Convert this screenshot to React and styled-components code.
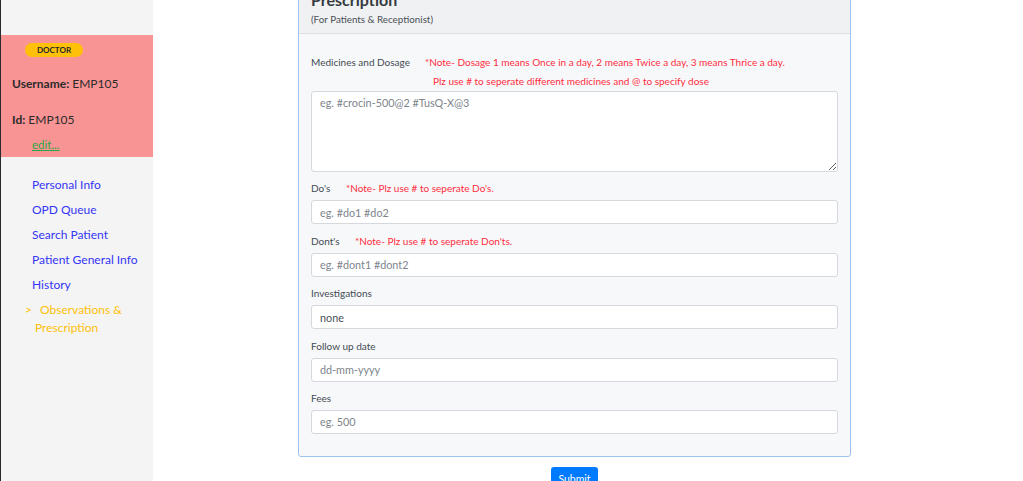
import React from 'react'
import styled, { createGlobalStyle } from 'styled-components'

const GlobalStyle = createGlobalStyle`
  html, body {
    margin: 0;
    padding: 0;
    height: 100%;
    overflow: hidden;
    background: #ffffff;
    font-family: Lato, 'Open Sans', sans-serif;
    color: #212529;
  }
  * {
    box-sizing: border-box;
  }
`

const Layout = styled.div`
  display: flex;
  height: 100vh;
`

/*Barre latérale*/
const Sidebar = styled.aside`
  width: 153px;
  flex-shrink: 0;
  background: #f4f4f4;
  border-left: 1px solid #2a2a2a;
  padding-top: 35px;
`

const ProfileBox = styled.div`
  background: #f99494;
  height: 122px;
  padding: 6px 0 0 11px;
  font-size: 12px;
`

const Badge = styled.span`
  display: inline-block;
  margin-left: 13px;
  width: 58px;
  height: 14px;
  line-height: 14px;
  border-radius: 7px;
  background: #ffc107;
  color: #212529;
  font-size: 8px;
  font-weight: 700;
  text-align: center;
`

const ProfileLine = styled.div`
  margin-top: ${(props) => props.gap}px;
  line-height: 16px;
  color: #2b2b2b;

  b {
    font-weight: 700;
  }
`

const EditLink = styled.a`
  display: block;
  margin: 9px 0 0 20px;
  color: #28a745;
  text-decoration: underline;
  font-size: 11.5px;
  line-height: 16px;
`

const Nav = styled.ul`
  list-style: none;
  margin: 0;
  padding: 19px 0 0 0;
`

const NavItem = styled.li`
  font-size: 12px;
  line-height: 18px;
  margin-bottom: 7px;
  padding-left: ${(props) => (props.active ? '34px' : '31px')};
  text-indent: ${(props) => (props.active ? '-10px' : '0')};
  padding-right: 8px;
  color: ${(props) => (props.active ? '#ffc107' : '#3535f5')};
`

const Caret = styled.span`
  display: inline-block;
  text-indent: 0;
  width: 15px;
`

/*Contenu principal*/
const Main = styled.main`
  flex: 1;
  padding-left: 145px;
`

const Card = styled.div`
  width: 553px;
  margin-top: -16px;
  border: 1px solid #9cc3ee;
  border-radius: 3px;
  background: #f7f8fa;
`

const CardHeader = styled.div`
  background: #f0f1f2;
  border-bottom: 1px solid #dcdfe3;
  padding: 5px 12px 0 12px;
  height: 49px;
`

const Title = styled.div`
  font-size: 16px;
  font-weight: 700;
  line-height: 20px;
  color: #343a40;
`

const Subtitle = styled.div`
  font-size: 9.8px;
  line-height: 18px;
  color: #495057;
`

const CardBody = styled.div`
  padding: 19px 12px 22px 12px;
`

const Field = styled.div`
  margin-bottom: 8.4px;

  &:last-child {
    margin-bottom: 0;
  }
`

const LabelRow = styled.div`
  display: flex;
  font-size: 10px;
  line-height: ${(props) => props.lh || 16}px;
  margin-bottom: ${(props) => (props.tight ? 0 : 4)}px;
  color: #444b52;
`

const Label = styled.span`
  width: ${(props) => props.w}px;
  flex-shrink: 0;
  white-space: nowrap;
`

const Note = styled.span`
  color: #ff2d3d;
  font-size: 10px;
  white-space: nowrap;
`

const NoteLine = styled.div`
  color: #ff2d3d;
  font-size: 10px;
  line-height: 19px;
  padding-left: 122px;
`

const Input = styled.input`
  display: block;
  width: 100%;
  height: 24px;
  border: 1px solid #d5d9dd;
  border-radius: 3px;
  background: #fff;
  padding: 0 8px;
  font-family: inherit;
  font-size: 10.8px;
  color: #495057;

  &::placeholder {
    color: #7d848b;
  }
`

const TextArea = styled.textarea`
  display: block;
  width: 100%;
  height: 81px;
  border: 1px solid #d5d9dd;
  border-radius: 3px;
  background: #fff;
  padding: 4px 8px;
  font-family: inherit;
  font-size: 10.8px;
  color: #495057;

  &::placeholder {
    color: #7d848b;
  }
`

const SubmitRow = styled.div`
  width: 553px;
  display: flex;
  justify-content: center;
  padding-top: 10px;
`

const SubmitButton = styled.button`
  background: #007bff;
  color: #fff;
  border: none;
  border-radius: 3px;
  width: 47px;
  height: 24px;
  font-family: inherit;
  font-size: 10.5px;
  padding: 0;
`

const navLinks = [
  'Personal Info',
  'OPD Queue',
  'Search Patient',
  'Patient General Info',
  'History',
]

function App() {
  return (
    <>
      <GlobalStyle />
      <Layout>
        <Sidebar>
          <ProfileBox>
            <Badge>DOCTOR</Badge>
            <ProfileLine gap={19}>
              <b>Username:</b> EMP105
            </ProfileLine>
            <ProfileLine gap={20}>
              <b>Id:</b> EMP105
            </ProfileLine>
            <EditLink href="#">edit...</EditLink>
          </ProfileBox>
          <Nav>
            {navLinks.map((link) => (
              <NavItem key={link}>{link}</NavItem>
            ))}
            <NavItem active>
              <Caret>&gt;</Caret>Observations &amp; Prescription
            </NavItem>
          </Nav>
        </Sidebar>
        <Main>
          <Card>
            <CardHeader>
              <Title>Prescription</Title>
              <Subtitle>(For Patients &amp; Receptionist)</Subtitle>
            </CardHeader>
            <CardBody>
              <Field>
                <LabelRow lh={19} tight>
                  <Label w={114}>Medicines and Dosage</Label>
                  <Note>
                    *Note- Dosage 1 means Once in a day, 2 means Twice a day, 3
                    means Thrice a day.
                  </Note>
                </LabelRow>
                <NoteLine>
                  Plz use # to seperate different medicines and @ to specify
                  dose
                </NoteLine>
                <TextArea placeholder="eg. #crocin-500@2 #TusQ-X@3" />
              </Field>
              <Field>
                <LabelRow>
                  <Label w={35}>Do's</Label>
                  <Note>*Note- Plz use # to seperate Do's.</Note>
                </LabelRow>
                <Input placeholder="eg. #do1 #do2" />
              </Field>
              <Field>
                <LabelRow>
                  <Label w={44}>Dont's</Label>
                  <Note>*Note- Plz use # to seperate Don'ts.</Note>
                </LabelRow>
                <Input placeholder="eg. #dont1 #dont2" />
              </Field>
              <Field>
                <LabelRow>
                  <Label>Investigations</Label>
                </LabelRow>
                <Input defaultValue="none" />
              </Field>
              <Field>
                <LabelRow>
                  <Label>Follow up date</Label>
                </LabelRow>
                <Input placeholder="dd-mm-yyyy" />
              </Field>
              <Field>
                <LabelRow>
                  <Label>Fees</Label>
                </LabelRow>
                <Input placeholder="eg. 500" />
              </Field>
            </CardBody>
          </Card>
          <SubmitRow>
            <SubmitButton>Submit</SubmitButton>
          </SubmitRow>
        </Main>
      </Layout>
    </>
  )
}

export default App
